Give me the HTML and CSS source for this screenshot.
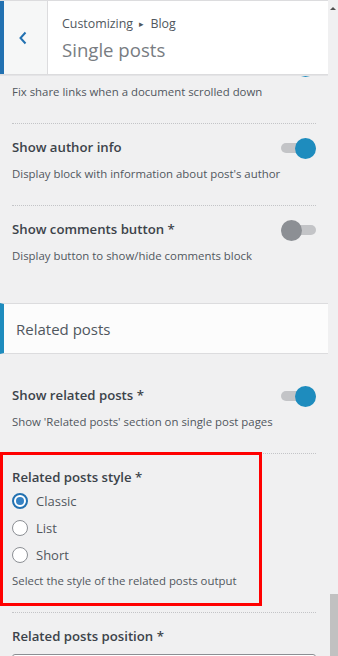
FILE: index.html
```html
<!DOCTYPE html>
<html lang="en">
<head>
    <meta charset="UTF-8">
    <meta name="viewport" content="width=device-width, initial-scale=1.0">
    <title>Customizing - Single posts</title>
    <link rel="stylesheet" href="styles.css">
</head>
<body>
    <div class="customizer">
        <div class="pane">
            <div class="pane-head">
                <button class="back" aria-label="Back">
                    <svg width="10" height="14" viewBox="0 0 10 14"><path d="M7.5 1.5 L2.5 7 L7.5 12.5" fill="none" stroke="#2271b1" stroke-width="2"/></svg>
                </button>
                <div class="head-title">
                    <span class="crumb">Customizing <span class="sep">&#9656;</span> Blog</span>
                    <h2>Single posts</h2>
                </div>
            </div>

            <ul class="controls controls-first">
                <!-- scrolled under the header: only the description shows -->
                <li class="control">
                    <div class="control-row">
                        <span class="control-title"></span>
                        <span class="toggle on"><span class="knob"></span></span>
                    </div>
                    <p class="control-desc">Fix share links when a document scrolled down</p>
                </li>
                <li class="control">
                    <div class="control-row">
                        <span class="control-title">Show author info</span>
                        <span class="toggle on"><span class="knob"></span></span>
                    </div>
                    <p class="control-desc">Display block with information about post's author</p>
                </li>
                <li class="control">
                    <div class="control-row">
                        <span class="control-title">Show comments button *</span>
                        <span class="toggle"><span class="knob"></span></span>
                    </div>
                    <p class="control-desc">Display button to show/hide comments block</p>
                </li>
            </ul>

            <h3 class="section-title">Related posts</h3>

            <ul class="controls">
                <li class="control">
                    <div class="control-row">
                        <span class="control-title">Show related posts *</span>
                        <span class="toggle on"><span class="knob"></span></span>
                    </div>
                    <p class="control-desc">Show 'Related posts' section on single post pages</p>
                </li>
                <li class="control control-marked">
                    <div class="marker"></div>
                    <div class="control-row">
                        <span class="control-title">Related posts style *</span>
                    </div>
                    <label class="radio"><span class="dot checked"></span>Classic</label>
                    <label class="radio"><span class="dot"></span>List</label>
                    <label class="radio"><span class="dot"></span>Short</label>
                    <p class="control-desc desc-tight">Select the style of the related posts output</p>
                </li>
                <li class="control">
                    <div class="control-row">
                        <span class="control-title">Related posts position *</span>
                    </div>
                    <div class="select"></div>
                </li>
            </ul>
        </div>
        <div class="scrollbar">
            <span class="arrow"></span>
            <span class="thumb"></span>
        </div>
    </div>
</body>
</html>
```

FILE: styles.css
```css
body {
    margin: 0;
    background-color: #f0f0f1;
    font-family: 'Open Sans', sans-serif;
    color: #50575e;
}
.customizer {
    display: flex;
    height: 656px;
    overflow: hidden;
}
.pane {
    width: 328px;
    flex: none;
    overflow: hidden;
}
.pane-head {
    position: relative;
    z-index: 1;
    display: flex;
    height: 73px;
    background-color: #fff;
    border-top: 1px solid #dcdcde;
    border-bottom: 1px solid #dcdcde;
    box-shadow: 0 1px 0 #e4e4e6;
}
.back {
    width: 48px;
    flex: none;
    border: none;
    border-left: 4px solid #2271b1;
    border-right: 1px solid #dcdcde;
    background-color: #f6f7f7;
    padding: 0 0 0 14px;
    display: flex;
    align-items: center;
}
.head-title {
    padding: 14px 14px 0;
}
.crumb {
    display: block;
    font-size: 12.4px;
    line-height: 18px;
    color: #50575e;
}
.crumb .sep {
    font-size: 9px;
    position: relative;
    top: -1px;
    margin: 0 3px;
}
.head-title h2 {
    margin: 4px 0 0;
    font-size: 18.6px;
    font-weight: 400;
    line-height: 24px;
    color: #787c82;
}
.controls {
    list-style: none;
    margin: 18px 0 0;
    padding: 0;
}
.controls-first {
    margin-top: -33px;
}
.control {
    position: relative;
    margin: 0 12px;
    padding: 13px 0 22px;
}
.control + .control {
    border-top: 1px dotted #c3c4c7;
}
.control-row {
    display: flex;
    justify-content: space-between;
    align-items: flex-start;
    height: 20px;
}
.control-title {
    font-size: 13.2px;
    font-weight: 600;
    line-height: 20px;
    color: #3c434a;
}
.control-desc {
    margin: 8px 0 0;
    font-size: 11.4px;
    line-height: 18px;
}
.desc-tight {
    margin-top: 4px;
}
.toggle {
    display: flex;
    align-items: center;
    width: 35px;
    height: 10px;
    margin-top: 6px;
    border-radius: 5px;
    background-color: #c3c4c7;
}
.toggle.on {
    justify-content: flex-end;
}
.knob {
    flex: none;
    width: 21px;
    height: 21px;
    border-radius: 50%;
    background-color: #8c8f94;
}
.toggle.on .knob {
    background-color: #1e8cbe;
}
.section-title {
    margin: 16px 0 0;
    height: 49px;
    display: flex;
    align-items: center;
    padding-left: 12px;
    border-left: 4px solid #1e8cbe;
    border-top: 1px solid #dcdcde;
    border-bottom: 1px solid #dcdcde;
    background-color: #fcfcfc;
    font-size: 15px;
    font-weight: 400;
    color: #50575e;
}
.radio {
    display: flex;
    align-items: center;
    height: 27px;
    font-size: 13px;
    color: #50575e;
}
.dot {
    box-sizing: border-box;
    width: 16px;
    height: 16px;
    margin-right: 8px;
    border: 1px solid #8c8f94;
    border-radius: 50%;
    background-color: #fff;
    display: flex;
    align-items: center;
    justify-content: center;
}
.dot.checked {
    border: 2px solid #2271b1;
}
.dot.checked::before {
    content: '';
    width: 8px;
    height: 8px;
    border-radius: 50%;
    background-color: #3582c4;
}
.marker {
    position: absolute;
    left: -12px;
    top: -2px;
    width: 262px;
    height: 154px;
    box-sizing: border-box;
    border: 3px solid #ff0000;
}
.select {
    margin-top: 8px;
    height: 30px;
    box-sizing: border-box;
    border: 1px solid #8c8f94;
    border-radius: 3px;
    background-color: #fff;
}
.scrollbar {
    width: 10px;
    flex: none;
    display: flex;
    flex-direction: column;
    justify-content: space-between;
    align-items: flex-end;
}
.arrow {
    margin: 7px 2px 0 0;
    width: 0;
    height: 0;
    border-left: 3px solid transparent;
    border-right: 3px solid transparent;
    border-bottom: 3px solid #505050;
}
.thumb {
    width: 8px;
    height: 62px;
    background-color: #c1c1c1;
}
```
